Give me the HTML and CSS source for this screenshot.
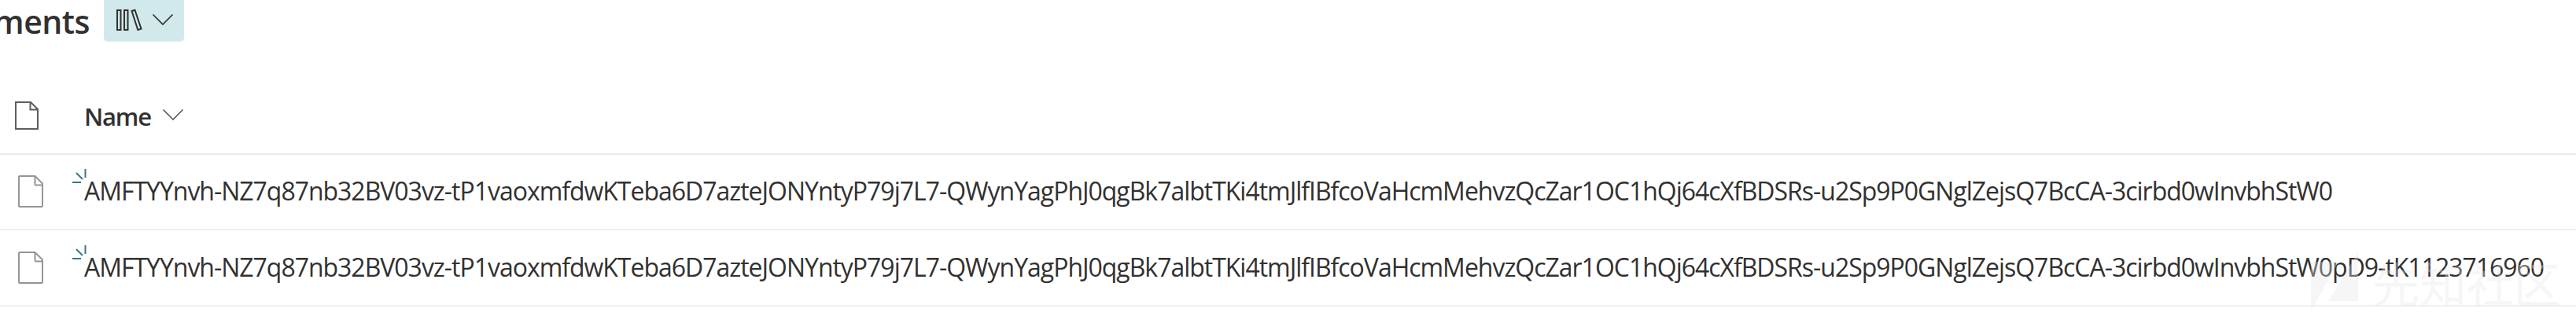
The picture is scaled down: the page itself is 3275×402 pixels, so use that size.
FILE: index.html
```html
<!DOCTYPE html>
<html lang="en">
<head>
<meta charset="utf-8">
<title>Documents</title>
<link rel="stylesheet" href="styles.css">
</head>
<body>
<header class="title-bar">
  <h1 class="title">ments</h1>
  <button class="view-switch" type="button" aria-label="Library view">
    <svg class="books" viewBox="0 0 34 30" fill="none" stroke="#323130" stroke-width="2"><path d="M2 2h4.500v25H2zM11 2h4.500v25H11zM20.500 3l4-1.300 8 24-4.200 1.300z"/></svg>
    <svg class="chevron" viewBox="0 0 28 16" fill="none" stroke="#323130" stroke-width="1.700"><path d="M1.500 1.500L14 14 26.500 1.500"/></svg>
  </button>
</header>
<main class="list">
  <div class="row head">
    <svg class="doc-head" viewBox="0 0 30 36" fill="none" stroke="#605e5c" stroke-width="2"><path d="M1 1h19l9 9v25H1zM19.500 1v9.500H29"/></svg>
    <span class="label">Name</span>
    <svg class="chevron" viewBox="0 0 28 16" fill="none" stroke="#605e5c" stroke-width="1.700"><path d="M1.500 1.500L14 14 26.500 1.500"/></svg>
  </div>
  <div class="row">
    <svg class="doc" viewBox="0 0 32 42" fill="none" stroke="#979593" stroke-width="2"><path d="M2 1h19.500L31 10.500V39q0 1-1 1H2q-1 0-1-1V2q0-1 1-1zM21.500 1v10q0 1.500 1.500 1.500h8"/></svg>
    <span class="name"><svg class="new" viewBox="0 0 20 20" fill="none" stroke="#3c7681" stroke-width="2"><path d="M17.500 1v11M6 6l8 8M1 18h11"/></svg>AMFTYYnvh-NZ7q87nb32BV03vz-tP1vaoxmfdwKTeba6D7azteJONYntyP79j7L7-QWynYagPhJ0qgBk7albtTKi4tmJlfIBfcoVaHcmMehvzQcZar1OC1hQj64cXfBDSRs-u2Sp9P0GNglZejsQ7BcCA-3cirbd0wInvbhStW0</span>
  </div>
  <div class="row last">
    <svg class="doc" viewBox="0 0 32 42" fill="none" stroke="#979593" stroke-width="2"><path d="M2 1h19.500L31 10.500V39q0 1-1 1H2q-1 0-1-1V2q0-1 1-1zM21.500 1v10q0 1.500 1.500 1.500h8"/></svg>
    <span class="name"><svg class="new" viewBox="0 0 20 20" fill="none" stroke="#3c7681" stroke-width="2"><path d="M17.500 1v11M6 6l8 8M1 18h11"/></svg>AMFTYYnvh-NZ7q87nb32BV03vz-tP1vaoxmfdwKTeba6D7azteJONYntyP79j7L7-QWynYagPhJ0qgBk7albtTKi4tmJlfIBfcoVaHcmMehvzQcZar1OC1hQj64cXfBDSRs-u2Sp9P0GNglZejsQ7BcCA-3cirbd0wInvbhStW0pD9-tK1123716960</span>
  </div>
</main>
<div class="watermark">
  <svg class="mark" viewBox="0 0 60 75" fill="currentColor"><path d="M0 12h35L0 75zM60 0v62H22z"/></svg>
  <span>先知社区</span>
</div>
</body>
</html>
```
FILE: styles.css
```css
* { box-sizing: border-box; }
body {
  margin: 0;
  height: 402px;
  overflow: hidden;
  position: relative;
  background: #fff;
  color: #323130;
  font-family: "Open Sans", "Noto Sans", sans-serif;
}
svg { display: block; flex: none; }
.title-bar { display: flex; align-items: flex-start; height: 101px; }
.title {
  width: 132px;
  margin: 0;
  font-size: 41px;
  line-height: 54px;
  font-weight: 600;
  letter-spacing: -0.5px;
  display: flex;
  justify-content: flex-end;
  padding-right: 18px;
}
.view-switch {
  width: 102px;
  height: 53px;
  padding: 11px 13px 0 15px;
  border: 0;
  border-radius: 0 0 5px 5px;
  background: #d1e9ea;
  display: flex;
  justify-content: space-between;
}
.books { width: 34px; height: 30px; }
.chevron { width: 28px; height: 16px; }
.view-switch .chevron { margin-top: 6px; }
.row {
  display: flex;
  align-items: center;
  height: 96px;
  padding-left: 23px;
  border-bottom: 2px solid #f1f0ef;
}
.head { padding-left: 19px; border-color: #eaeaea; }
.last { height: 97px; padding-top: 1px; }
.doc-head { width: 30px; height: 36px; margin-top: -2px; }
.label { margin: -1px 0 0 58px; width: 86px; font-size: 31px; line-height: 44px; font-weight: 600; letter-spacing: -1.2px; }
.head .chevron { margin-left: 13px; margin-top: -4px; }
.doc { width: 32px; height: 42px; }
.name { position: relative; margin: -3px 0 0 52px; font-size: 32px; line-height: 44px; letter-spacing: -1.025px; white-space: nowrap; }
.new { position: absolute; left: -16px; top: -7px; width: 20px; height: 20px; }
.watermark {
  position: absolute;
  left: 2938px;
  top: 321px;
  display: flex;
  color: rgba(229, 229, 229, 0.35);
  font: 60px/76px "Noto Sans CJK SC", sans-serif;
}
.mark { width: 60px; height: 75px; margin-right: 18px; }
```
